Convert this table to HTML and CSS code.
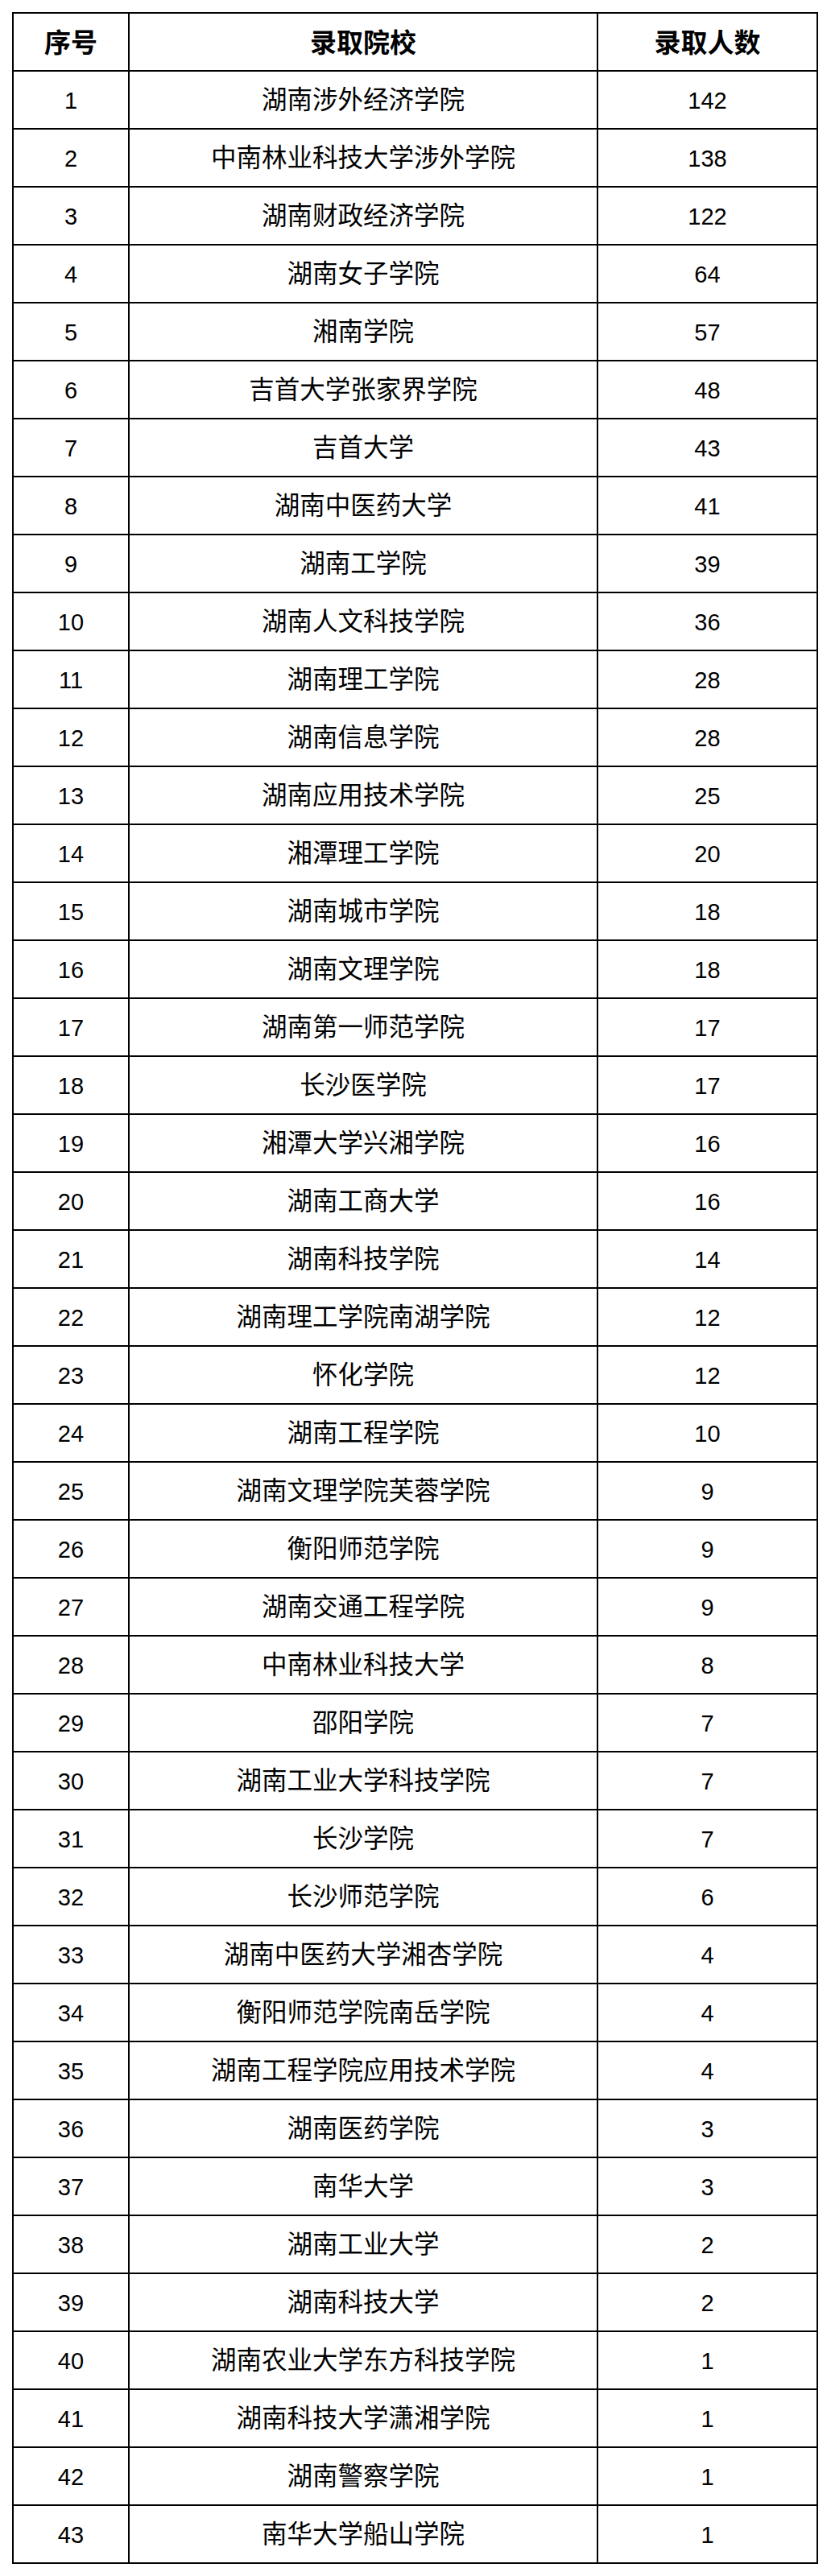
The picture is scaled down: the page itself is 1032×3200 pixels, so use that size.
FILE: index.html
```html
<!DOCTYPE html>
<html lang="zh-CN">
<head>
<meta charset="utf-8">
<title>录取院校</title>
<link rel="stylesheet" href="styles.css">
</head>
<body>
<div class="page">
<div class="grid">
<div class="cell head">序号</div><div class="cell head">录取院校</div><div class="cell head">录取人数</div>
<div class="cell num">1</div><div class="cell">湖南涉外经济学院</div><div class="cell num">142</div>
<div class="cell num">2</div><div class="cell">中南林业科技大学涉外学院</div><div class="cell num">138</div>
<div class="cell num">3</div><div class="cell">湖南财政经济学院</div><div class="cell num">122</div>
<div class="cell num">4</div><div class="cell">湖南女子学院</div><div class="cell num">64</div>
<div class="cell num">5</div><div class="cell">湘南学院</div><div class="cell num">57</div>
<div class="cell num">6</div><div class="cell">吉首大学张家界学院</div><div class="cell num">48</div>
<div class="cell num">7</div><div class="cell">吉首大学</div><div class="cell num">43</div>
<div class="cell num">8</div><div class="cell">湖南中医药大学</div><div class="cell num">41</div>
<div class="cell num">9</div><div class="cell">湖南工学院</div><div class="cell num">39</div>
<div class="cell num">10</div><div class="cell">湖南人文科技学院</div><div class="cell num">36</div>
<div class="cell num">11</div><div class="cell">湖南理工学院</div><div class="cell num">28</div>
<div class="cell num">12</div><div class="cell">湖南信息学院</div><div class="cell num">28</div>
<div class="cell num">13</div><div class="cell">湖南应用技术学院</div><div class="cell num">25</div>
<div class="cell num">14</div><div class="cell">湘潭理工学院</div><div class="cell num">20</div>
<div class="cell num">15</div><div class="cell">湖南城市学院</div><div class="cell num">18</div>
<div class="cell num">16</div><div class="cell">湖南文理学院</div><div class="cell num">18</div>
<div class="cell num">17</div><div class="cell">湖南第一师范学院</div><div class="cell num">17</div>
<div class="cell num">18</div><div class="cell">长沙医学院</div><div class="cell num">17</div>
<div class="cell num">19</div><div class="cell">湘潭大学兴湘学院</div><div class="cell num">16</div>
<div class="cell num">20</div><div class="cell">湖南工商大学</div><div class="cell num">16</div>
<div class="cell num">21</div><div class="cell">湖南科技学院</div><div class="cell num">14</div>
<div class="cell num">22</div><div class="cell">湖南理工学院南湖学院</div><div class="cell num">12</div>
<div class="cell num">23</div><div class="cell">怀化学院</div><div class="cell num">12</div>
<div class="cell num">24</div><div class="cell">湖南工程学院</div><div class="cell num">10</div>
<div class="cell num">25</div><div class="cell">湖南文理学院芙蓉学院</div><div class="cell num">9</div>
<div class="cell num">26</div><div class="cell">衡阳师范学院</div><div class="cell num">9</div>
<div class="cell num">27</div><div class="cell">湖南交通工程学院</div><div class="cell num">9</div>
<div class="cell num">28</div><div class="cell">中南林业科技大学</div><div class="cell num">8</div>
<div class="cell num">29</div><div class="cell">邵阳学院</div><div class="cell num">7</div>
<div class="cell num">30</div><div class="cell">湖南工业大学科技学院</div><div class="cell num">7</div>
<div class="cell num">31</div><div class="cell">长沙学院</div><div class="cell num">7</div>
<div class="cell num">32</div><div class="cell">长沙师范学院</div><div class="cell num">6</div>
<div class="cell num">33</div><div class="cell">湖南中医药大学湘杏学院</div><div class="cell num">4</div>
<div class="cell num">34</div><div class="cell">衡阳师范学院南岳学院</div><div class="cell num">4</div>
<div class="cell num">35</div><div class="cell">湖南工程学院应用技术学院</div><div class="cell num">4</div>
<div class="cell num">36</div><div class="cell">湖南医药学院</div><div class="cell num">3</div>
<div class="cell num">37</div><div class="cell">南华大学</div><div class="cell num">3</div>
<div class="cell num">38</div><div class="cell">湖南工业大学</div><div class="cell num">2</div>
<div class="cell num">39</div><div class="cell">湖南科技大学</div><div class="cell num">2</div>
<div class="cell num">40</div><div class="cell">湖南农业大学东方科技学院</div><div class="cell num">1</div>
<div class="cell num">41</div><div class="cell">湖南科技大学潇湘学院</div><div class="cell num">1</div>
<div class="cell num">42</div><div class="cell">湖南警察学院</div><div class="cell num">1</div>
<div class="cell num">43</div><div class="cell">南华大学船山学院</div><div class="cell num">1</div>
</div>
</div>
</body>
</html>
```
FILE: styles.css
```css
html, body {
  margin: 0;
  padding: 0;
  background: #fff;
}
.page {
  padding: 15px;
}
.grid {
  display: grid;
  grid-template-columns: 142px 580px 271px;
  grid-auto-rows: 70px;
  gap: 2px;
  padding: 2px;
  background: #000;
  width: max-content;
}
.cell {
  background: #fff;
  display: flex;
  align-items: center;
  justify-content: center;
  font-family: "Liberation Sans", "Noto Sans CJK SC", sans-serif;
  font-size: 31.5px;
  color: #000;
  line-height: 1;
  padding-top: 2px;
  box-sizing: border-box;
}
.head {
  font-size: 33px;
  font-weight: bold;
}
.num {
  font-size: 29px;
}
```
